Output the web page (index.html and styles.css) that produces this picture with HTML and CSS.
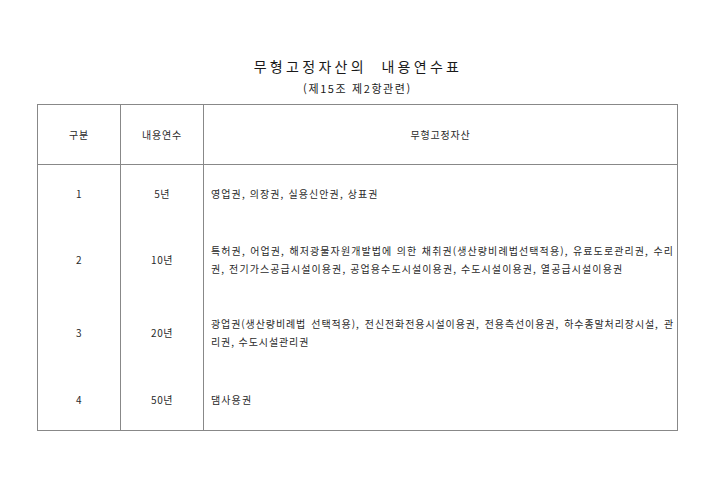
FILE: index.html
```html
<!DOCTYPE html>
<html lang="ko">
<head>
<meta charset="utf-8">
<title>무형고정자산의 내용연수표</title>
<link rel="stylesheet" href="styles.css">
</head>
<body>
<div class="page">
  <h1 class="title">무형고정자산의&nbsp; 내용연수표</h1>
  <p class="subtitle">(제15조 제2항관련)</p>
  <table class="grid">
    <colgroup>
      <col class="c1"><col class="c2"><col class="c3">
    </colgroup>
    <thead>
      <tr class="head">
        <th>구분</th>
        <th>내용연수</th>
        <th>무형고정자산</th>
      </tr>
    </thead>
    <tbody>
      <tr class="r1">
        <td class="num">1</td>
        <td class="num">5년</td>
        <td class="txt">영업권, 의장권, 실용신안권, 상표권</td>
      </tr>
      <tr class="r2">
        <td class="num">2</td>
        <td class="num">10년</td>
        <td class="txt">특허권, 어업권, 해저광물자원개발법에 의한 채취권(생산량비례법선택적용), 유료도로관리권, 수리권, 전기가스공급시설이용권, 공업용수도시설이용권, 수도시설이용권, 열공급시설이용권</td>
      </tr>
      <tr class="r3">
        <td class="num">3</td>
        <td class="num">20년</td>
        <td class="txt">광업권(생산량비례법 선택적용), 전신전화전용시설이용권, 전용측선이용권, 하수종말처리장시설, 관리권, 수도시설관리권</td>
      </tr>
      <tr class="r4">
        <td class="num">4</td>
        <td class="num">50년</td>
        <td class="txt">댐사용권</td>
      </tr>
    </tbody>
  </table>
</div>
</body>
</html>
```
FILE: styles.css
```css
html, body {
  margin: 0;
  padding: 0;
  background: #ffffff;
}
body {
  font-family: "Noto Sans CJK KR", "Noto Sans", sans-serif;
  color: #2a2a2a;
}
.page {
  width: 713px;
  padding-top: 56px;
}
.title {
  margin: 0;
  padding-left: 3px;
  font-size: 14px;
  font-weight: normal;
  line-height: 20px;
  text-align: center;
  letter-spacing: 3.3px;
  color: #1a1a1a;
}
.subtitle {
  margin: 4px 0 0 0;
  padding-left: 2px;
  font-size: 11px;
  line-height: 16px;
  text-align: center;
  letter-spacing: 1.6px;
  color: #1a1a1a;
}
.grid {
  margin: 8px 0 0 37px;
  width: 640px;
  border-collapse: collapse;
  table-layout: fixed;
  border: 1px solid #888888;
  font-size: 10px;
}
.c1 { width: 83px; }
.c2 { width: 83px; }
.c3 { width: 474px; }
.grid th, .grid td {
  border-left: 1px solid #888888;
  border-right: 1px solid #888888;
  padding: 0;
  font-weight: normal;
  vertical-align: middle;
}
.head th {
  height: 59px;
  border-bottom: 1px solid #888888;
  text-align: center;
  line-height: 14px;
  letter-spacing: 0.8px;
}
.num {
  text-align: center;
  line-height: 14px;
  letter-spacing: 0.5px;
}
.txt {
  padding: 0 3px 0 7px !important;
  text-align: justify;
  line-height: 18px;
  letter-spacing: 1.1px;
}
.r3 .txt {
  letter-spacing: 0.9px;
}
.r1 td { height: 58px; }
.r2 td { height: 74px; }
.r3 td { height: 72px; }
.r4 td { height: 61px; }
```
